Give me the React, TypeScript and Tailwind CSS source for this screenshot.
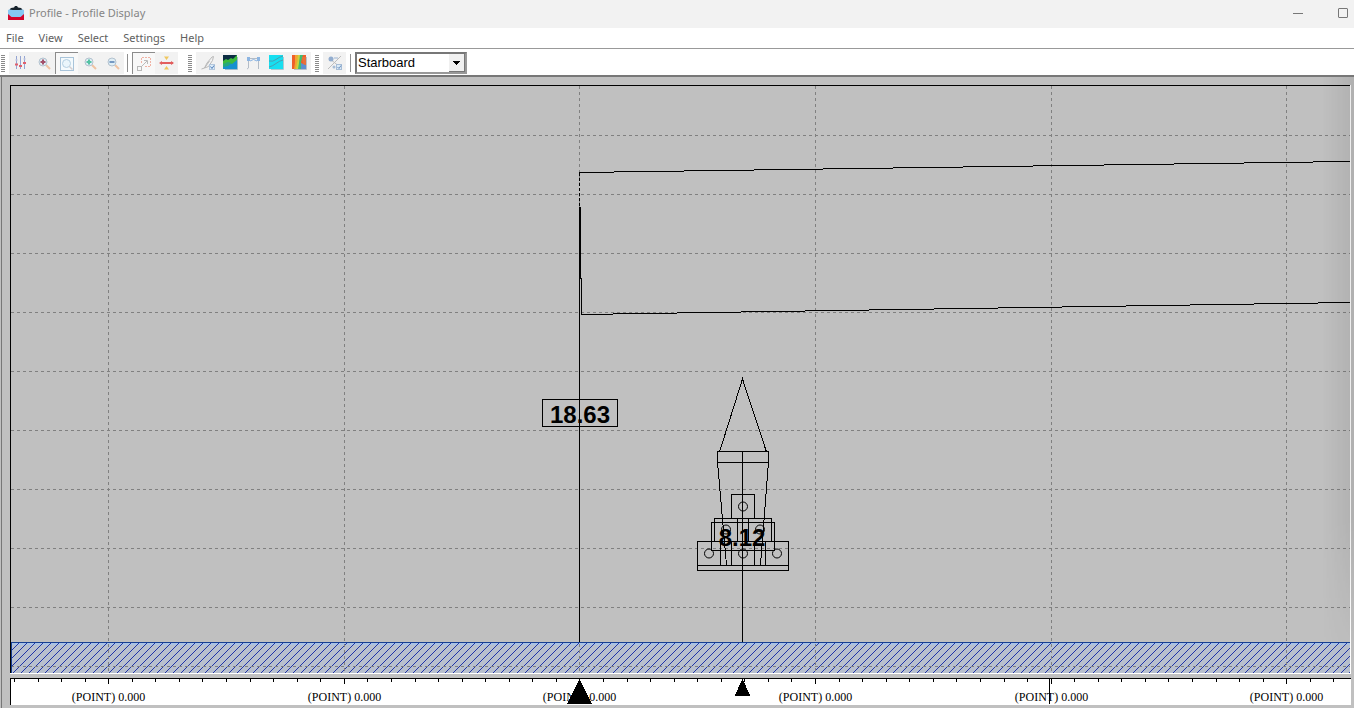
import React from "react";

const X_LABELLED = [97, 333, 568, 804, 1040, 1275];
const X_MORE = [1511, 1747, 1982, 2218, 2454];
const Y_LINES = [49, 108, 167, 226, 285, 344, 403, 462, 521, 580];
const COLUMNS = [...X_LABELLED, ...X_MORE];
const TICKS = Array.from({ length: 110 }, (_, i) => Math.round(3 + i * 23.56));

function AppIcon() {
  return (
    <svg width="16" height="14" viewBox="0 0 16 14" aria-hidden="true">
      <rect y="3" width="16" height="11" fill="#d3042c" />
      <path d="M0 3h16v5l-3.500 3h-9L0 8z" fill="#86c8f4" />
      <path d="M0 0h16v4L13 3H3L0 4z" fill="#f2f2f2" />
      <path d="M1.500 3.500 3 2l3-.5L7 0h2l1 1.500 3 .5 1.500 1.500q-6.500 1-13 0z" fill="#17232c" />
    </svg>
  );
}

type IconProps = { children: React.ReactNode };
function Glyph({ children }: IconProps) {
  return (
    <svg width="16" height="16" viewBox="0 0 16 16" fill="none" aria-hidden="true">
      {children}
    </svg>
  );
}

function Magnifier({ color, sign }: { color: string; sign: React.ReactNode }) {
  return (
    <Glyph>
      <path d="m10 10 4 4" stroke="#f0c3a2" strokeWidth="2" />
      <circle cx="7" cy="7" r="4" fill="#e0eef5" stroke="#b3c2cf" />
      <g stroke={color} strokeWidth="2">{sign}</g>
    </Glyph>
  );
}

const icons = {
  sliders: (
    <Glyph>
      <path d="M3.500 1v13M7.500 1v13M11.500 1v13" stroke="#93a4d2" />
      <path d="M2 9.500h3M6 11h3M10 8h3" stroke="#e0606e" strokeWidth="2" />
      <path d="M2 5h3M10 4h3" stroke="#c9cfe6" />
    </Glyph>
  ),
  zoomPoint: <Magnifier color="#a3506a" sign={<path d="M7 4.500v5M4.500 7h5" />} />,
  zoomArea: (
    <Glyph>
      <rect x="1.500" y="1.500" width="13" height="13" fill="#f4fafd" stroke="#a9c4da" />
      <circle cx="7.500" cy="7.500" r="4" fill="#eaf5fb" stroke="#b4cfe2" />
      <path d="m10.500 10.500 3 3" stroke="#d5cfd0" strokeWidth="1.500" />
    </Glyph>
  ),
  zoomIn: <Magnifier color="#55c2a4" sign={<path d="M7 4.500v5M4.500 7h5" />} />,
  zoomOut: <Magnifier color="#7598c2" sign={<path d="M4.500 7h5" />} />,
  expand: (
    <Glyph>
      <path d="M5.500 7V1.500h9v9H8" stroke="#f0b3a5" strokeDasharray="2 1" />
      <rect x="1.500" y="10.500" width="4" height="4" stroke="#b8b8b8" />
      <path d="m5 11 6-6M8 4.500h3.500V8" stroke="#bababa" />
    </Glyph>
  ),
  spread: (
    <Glyph>
      <path d="M2 8h12" stroke="#e25e5e" strokeWidth="2" />
      <path d="m0 8 3-2v4zM15 8l-3-2v4z" fill="#e25e5e" />
      <path d="M5 1.500h5L7.500 5zM5 14.500h5L7.500 11z" fill="#efc75f" />
    </Glyph>
  ),
  sketch: (
    <Glyph>
      <path d="m1.500 14 3-1 2.500-5 5-6 1.500-.5-1 4-4 6-4 1.500M4.500 13l5-7" stroke="#b9b9b9" />
      <rect x="9.500" y="9.500" width="5" height="5" fill="#dcecf8" stroke="#b3c7dd" />
      <path d="m10.500 11.500 1.500 2 2-3" stroke="#5380bb" />
    </Glyph>
  ),
  terrain: (
    <Glyph>
      <rect width="14" height="14" fill="#0b2c42" />
      <path d="m0 6 3-2 2 1 3-2 2 1 4-4v7l-7 4-7 1z" fill="#3dbb3c" />
      <path d="m0 10 5-2 4 1 5-4v9H0z" fill="#1590cf" />
      <path d="m0 9 5-2 4 1-4 3-5 1z" fill="#25a77c" />
      <path d="M14.500 2v12.500H2" stroke="#9fb9c8" />
    </Glyph>
  ),
  span: (
    <Glyph>
      <path d="M3 3.500h10M2.500 3v10L1 14M12.500 3v11" stroke="#b3bcc7" />
      <path d="M1 2h3v4H1zM11 2h3v4h-3z" fill="#8db5e2" />
      <path d="M4 6q3.500-3 7 0" stroke="#8db5e2" />
    </Glyph>
  ),
  surface: (
    <Glyph>
      <rect width="14" height="14" fill="#17dff0" />
      <path d="M0 6q4 1 7-1.500T14 1M0 12q4-1 7-3.500T14 5" stroke="#4a9eb2" />
      <path d="M14.500 2v12.500H2" stroke="#abcad0" />
    </Glyph>
  ),
  heat: (
    <Glyph>
      <rect width="14" height="14" fill="#f0602a" />
      <path d="M3 0h4L5 8v6H2l1-6z" fill="#f2a531" />
      <path d="M6 0h3L7 8v6H4l1-6z" fill="#c9d43f" />
      <path d="M8 0h3L9 7l1 7H6l1-6z" fill="#3fbd74" />
      <path d="M9 8l5 2v4H9z" fill="#5f8fd0" />
      <path d="M10 2h4v8l-3-1z" fill="#e9713a" />
      <path d="M14.500 2v12.500H2" stroke="#b7c1cb" />
    </Glyph>
  ),
  nodes: (
    <Glyph>
      <path d="M1 14 14 1M3 4l5 4 5 4" stroke="#bdbdbd" />
      <circle cx="4" cy="4" r="2.500" fill="#93adcf" />
      <path d="M7 3h4" stroke="#9db5d3" />
      <rect x="9.500" y="9.500" width="5" height="5" fill="#dcecf8" stroke="#a7bdd6" />
      <path d="m10.500 12 1.500 1.500 2-3" stroke="#6c90bf" />
      <circle cx="7" cy="12" r="1.500" fill="#a7bdd6" />
    </Glyph>
  ),
};

function Grip() {
  return (
    <span className="h-[17px] w-1 shrink-0 bg-[repeating-linear-gradient(#8a8a8a_0_1px,#fff_1px_2px)]" />
  );
}

function ToolButton({ icon, label, pressed }: { icon: keyof typeof icons; label: string; pressed?: boolean }) {
  return (
    <button
      type="button"
      aria-label={label}
      aria-pressed={pressed}
      className={
        pressed
          ? "flex h-[22px] w-[23px] shrink-0 items-center justify-center border-t border-l border-[#8c8c8c] bg-[#f8f8f8]"
          : "flex h-[22px] w-[23px] shrink-0 items-center justify-center bg-[#f2f2f2]"
      }
    >
      {icons[icon]}
    </button>
  );
}

function Separator() {
  return <span className="h-[18px] w-px shrink-0 bg-[#8f8f8f]" />;
}

function Toolbar() {
  return (
    <div role="toolbar" aria-label="Display" className="flex h-[27px] shrink-0 items-center border-t border-[#999] bg-white pt-0.5 pl-px">
      <Grip />
      <div className="ml-1 flex items-center">
        <ToolButton icon="sliders" label="Options" />
        <ToolButton icon="zoomPoint" label="Zoom to point" />
        <ToolButton icon="zoomArea" label="Zoom area" pressed />
        <ToolButton icon="zoomIn" label="Zoom in" />
        <ToolButton icon="zoomOut" label="Zoom out" />
      </div>
      <div className="ml-[3px] flex items-center gap-1">
        <Separator />
        <div className="flex">
          <ToolButton icon="expand" label="Fit" pressed />
          <ToolButton icon="spread" label="Spread" />
        </div>
      </div>
      <div className="ml-[10px] flex items-center gap-1">
        <Grip />
        <div className="flex">
          <ToolButton icon="sketch" label="Sketch" />
          <ToolButton icon="terrain" label="Terrain" />
          <ToolButton icon="span" label="Span" />
          <ToolButton icon="surface" label="Surface" />
          <ToolButton icon="heat" label="Heat map" />
        </div>
      </div>
      <div className="ml-1 flex items-center gap-1">
        <Grip />
        <ToolButton icon="nodes" label="Nodes" />
        <Separator />
        <div className="relative flex">
          <select
            aria-label="Side"
            defaultValue="Starboard"
            className="h-[22px] w-28 appearance-none border-2 border-t-[#777] border-r-[#999] border-b-[#999] border-l-[#777] bg-white pl-px font-['Liberation_Sans',sans-serif] text-[13px] leading-4 text-black"
          >
            <option>Starboard</option>
            <option>Port</option>
          </select>
          <span className="pointer-events-none absolute top-0.5 right-0.5 flex h-[18px] w-4 items-center justify-center border-r border-b border-[#777] bg-[#f0f0f0]">
            <svg width="7" height="4" viewBox="0 0 7 4" shapeRendering="crispEdges" aria-hidden="true">
              <path d="M0 0h7L3.500 4z" fill="#000" />
            </svg>
          </span>
        </div>
      </div>
    </div>
  );
}

function Tower() {
  return (
    <g>
      <path d="m708.500 366 23-73 24 73" />
      <path d="M706.500 365.500h51v11h-51zM706.500 376l9 103M757.500 376l-8 103" />
      <path d="M720.500 408.500h23v24h-23z" />
      <path d="M703.500 432.500h57v23h-57zM700.500 436.500h63v28h-63z" />
      <path d="M686.500 455.500h91v29h-91zM686.500 479.500h91" />
      <path d="M709.500 455v24M720.500 455v24M743.500 455v24M754.500 455v24M726.500 432v23M737.500 432v23" />
      <g shapeRendering="auto">
        <circle cx="732" cy="420.500" r="4.500" />
        <circle cx="715" cy="443.500" r="4.500" />
        <circle cx="749" cy="443.500" r="4.500" />
        <circle cx="698" cy="467.500" r="4.500" />
        <circle cx="732" cy="467.500" r="4.500" />
        <circle cx="766" cy="467.500" r="4.500" />
      </g>
    </g>
  );
}

function Chart() {
  return (
    <svg className="block min-h-0 w-full flex-1 border-t border-l border-black" role="img" aria-label="Profile" shapeRendering="crispEdges">
      <defs>
        <pattern id="hatch" x="5" width="8" height="8" patternUnits="userSpaceOnUse">
          <path
            d="M0 7h1v1H0zM1 6h1v1H1zM2 5h1v1H2zM3 4h1v1H3zM4 3h1v1H4zM5 2h1v1H5zM6 1h1v1H6zM7 0h1v1H7z"
            fill="#2135a8"
          />
        </pattern>
      </defs>
      <rect y="556" width="100%" height="60" fill="#b8c0ce" />
      <rect y="557" width="100%" height="2" fill="#a9c3e6" />
      <rect y="557" width="100%" height="60" fill="url(#hatch)" />
      <g stroke="#808080" strokeDasharray="3 3">
        {COLUMNS.map((x) => (
          <line key={x} x1={x + 0.5} x2={x + 0.5} y1="0" y2="100%" />
        ))}
        {Y_LINES.map((y) => (
          <line key={y} y1={y + 0.5} y2={y + 0.5} x1="0" x2="100%" />
        ))}
      </g>
      <path d="M0 556.500H4000M.5 556v60" stroke="#173f91" />
      <g stroke="#000" fill="none">
        <path d="m568.500 86.500 1000-14.300M570.500 228.500l1000-15.600" />
        <path d="M568.500 87v34" strokeDasharray="3 2" />
        <path d="M569.500 121v72M570.500 192v37" />
        <path d="M568.500 121v435M731.500 366v190" />
        <path d="M531.500 313.500h75v27h-75z" />
        <Tower />
      </g>
      <g className="font-['Liberation_Sans',sans-serif] text-2xl font-bold" textAnchor="middle">
        <text x="569" y="337">18.63</text>
        <text x="731" y="460">8.12</text>
      </g>
    </svg>
  );
}

function Ruler() {
  return (
    <svg className="block h-[27px] w-full shrink-0 border-t border-l border-black bg-white" role="img" aria-label="Scale" shapeRendering="crispEdges">
      <g stroke="#000">
        {TICKS.map((x) => (
          <line key={x} x1={x + 0.5} x2={x + 0.5} y1="0" y2="3" />
        ))}
        {COLUMNS.map((x) => (
          <line key={x} x1={x + 0.5} x2={x + 0.5} y1="0" y2="5" />
        ))}
        <path d="M1038.500 0v25" />
      </g>
      <g className="font-['Liberation_Serif',serif] text-xs" textAnchor="middle">
        {X_LABELLED.map((x) => (
          <text key={x} x={x + 0.5} y="22">(POINT) 0.000</text>
        ))}
      </g>
      <path d="m568.500 0 12.500 25h-25zM731.500 0l8 17h-16z" />
    </svg>
  );
}

export default function App() {
  return (
    <div className="flex h-screen flex-col overflow-hidden bg-[#c0c0c0] font-['Noto_Sans',sans-serif] text-[11px]">
      <header className="flex h-7 shrink-0 items-center justify-between bg-[#f2f2f2] pr-1.5 pb-0.5 pl-2 text-[#858585]">
        <h1 className="flex items-center gap-[5px]">
          <AppIcon />
          Profile - Profile Display
        </h1>
        <div className="flex gap-[35px]">
          <button type="button" aria-label="Minimize">
            <svg width="10" height="10" viewBox="0 0 10 10" stroke="#777" aria-hidden="true"><path d="M0 5.500h10" /></svg>
          </button>
          <button type="button" aria-label="Maximize">
            <svg width="10" height="10" viewBox="0 0 10 10" stroke="#777" fill="none" aria-hidden="true"><rect x=".5" y=".5" width="9" height="9" rx=".5" /></svg>
          </button>
        </div>
      </header>
      <nav className="flex h-5 shrink-0 items-center gap-[15px] bg-white pl-1.5 text-[#606060]">
        <button type="button">File</button>
        <button type="button">View</button>
        <button type="button">Select</button>
        <button type="button">Settings</button>
        <button type="button">Help</button>
      </nav>
      <Toolbar />
      <main className="relative flex min-h-0 flex-1 flex-col border-t-2 border-[#777] pl-px">
        <div className="flex min-h-0 flex-1 flex-col border-l border-[#777] pt-2 pr-[3px] pb-[3px] pl-2">
          <div className="flex min-h-0 flex-1 flex-col border-r border-b border-white">
            <Chart />
          </div>
          <div className="mt-1 flex flex-col">
            <Ruler />
          </div>
        </div>
        <div className="pointer-events-none absolute top-0 right-0 h-full w-8 bg-linear-to-r from-black/0 to-black/8 mask-b-from-70% mask-b-to-95%" />
      </main>
    </div>
  );
}
